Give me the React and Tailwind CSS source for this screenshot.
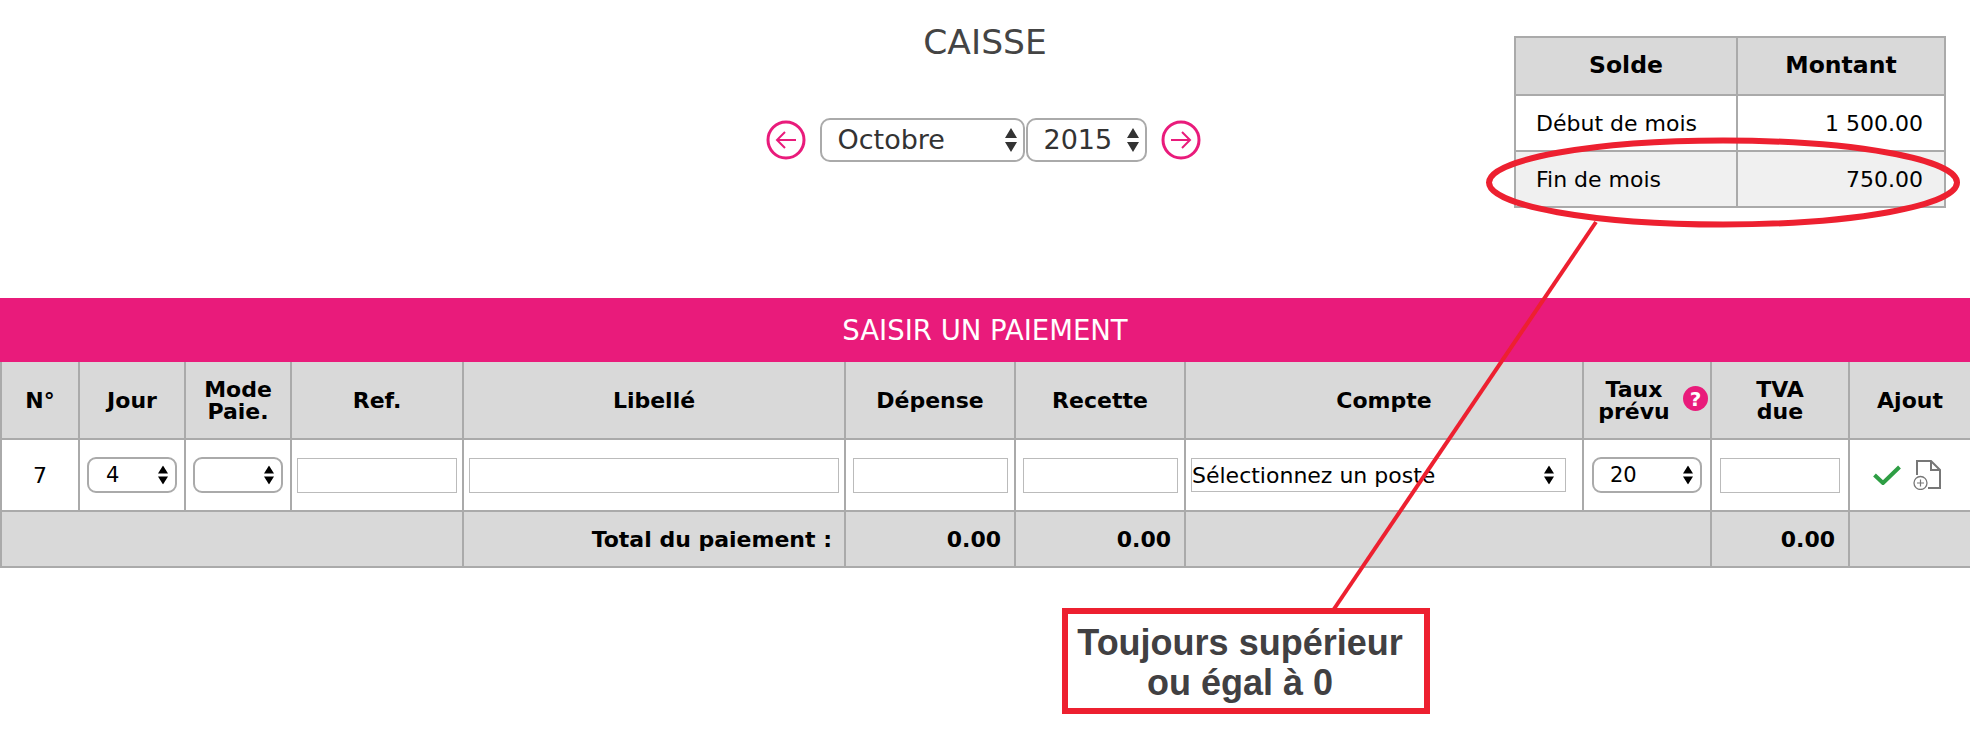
import React from "react";

const Arrows = ({ className = "" }) => (
  <svg viewBox="0 0 12 24" preserveAspectRatio="none" className={`pointer-events-none absolute top-1/2 -translate-y-1/2 ${className}`} aria-hidden="true">
    <path d="M6 0 L12 10 H0 Z M6 24 L0 14 H12 Z" fill="currentColor" />
  </svg>
);

const Pick = ({ value, wrap, text, arrow, children }) => (
  <div className={`relative ${wrap}`}>
    <select defaultValue={value} className={`block h-full w-full appearance-none bg-white outline-none ${text}`}>
      {children}
    </select>
    <Arrows className={arrow} />
  </div>
);

const CircleArrow = ({ dir }) => (
  <svg viewBox="0 0 40 40" width="40" height="40" fill="none" stroke="#e91b7b" aria-hidden="true">
    <circle cx="20" cy="20" r="18" strokeWidth="3" />
    {dir === "left" ? (
      <path d="M30 20 H11 M19 12 L11 20 L19 28" strokeWidth="2" />
    ) : (
      <path d="M10 20 H29 M21 12 L29 20 L21 28" strokeWidth="2" />
    )}
  </svg>
);

const Field = ({ className }) => (
  <input type="text" className={`mx-auto block h-[35px] border border-[#bbbbbb] bg-white outline-none ${className}`} />
);

const th = "border-2 border-t-0 border-[#aaaaaa] bg-[#d9d9d9] p-0 pt-[2px] text-center align-middle text-[22px] font-bold leading-[22px] text-black";
const td = "border-2 border-[#aaaaaa] bg-white p-0 align-middle";
const tot = "border-2 border-[#aaaaaa] bg-[#d9d9d9] p-0 text-right align-middle text-[22px] font-bold text-black";
const boxSelect = "rounded-[9px] border-2 border-[#aaaaaa] text-[21px] leading-none text-black";
const smallArrow = "right-[9px] h-[19px] w-[10px] text-black";
const navArrow = "right-[8px] h-[24px] w-[12px] text-[#333333]";
const navSelect = "rounded-[10px] border-2 border-[#aaaaaa] pl-[16px] text-[27px] text-[#333333]";

export default function App() {
  return (
    <div className="relative h-[737px] w-[1970px] overflow-hidden bg-white font-['DejaVu_Sans','Liberation_Sans',sans-serif]">
      <header className="grid h-[298px] grid-cols-[1fr_auto_1fr]">
        <div />
        <div className="flex flex-col items-center">
          <h1 className="mt-[22px] text-[34.5px] font-normal leading-[40px] text-[#444444]">CAISSE</h1>
          <div className="mt-[56px] flex items-center pr-[4px]">
            <CircleArrow dir="left" />
            <Pick value="Octobre" wrap="ml-[14px] h-[44px] w-[205px]" text={navSelect} arrow={navArrow}>
              <option>Octobre</option>
            </Pick>
            <Pick value="2015" wrap="ml-[1px] h-[44px] w-[121px]" text={navSelect} arrow={navArrow}>
              <option>2015</option>
            </Pick>
            <div className="ml-[14px]">
              <CircleArrow dir="right" />
            </div>
          </div>
        </div>
        <div className="flex justify-end pr-[24px] pt-[36px]">
          <table className="h-[170px] w-[430px] table-fixed border-collapse text-[22px] text-black">
            <colgroup>
              <col className="w-[222px]" />
              <col className="w-[208px]" />
            </colgroup>
            <tbody>
              <tr className="h-[58px]">
                <th className="border-2 border-[#aaaaaa] bg-[#d9d9d9] text-[23.5px] font-bold">Solde</th>
                <th className="border-2 border-[#aaaaaa] bg-[#d9d9d9] text-[23.5px] font-bold">Montant</th>
              </tr>
              <tr className="h-[56px]">
                <td className="border-2 border-[#aaaaaa] pl-[20px]">Début de mois</td>
                <td className="border-2 border-[#aaaaaa] pr-[21px] text-right">1 500.00</td>
              </tr>
              <tr className="h-[56px] bg-[#f0f0f0]">
                <td className="border-2 border-[#aaaaaa] pl-[20px]">Fin de mois</td>
                <td className="border-2 border-[#aaaaaa] pr-[21px] text-right">750.00</td>
              </tr>
            </tbody>
          </table>
        </div>
      </header>

      <section>
        <div className="flex h-[64px] items-center justify-center bg-[#e91b7b] pt-[1px] text-[27.5px] text-white">SAISIR UN PAIEMENT</div>
        <table className="w-[1970px] table-fixed border-collapse text-[22px] text-black">
          <colgroup>
            <col className="w-[78px]" />
            <col className="w-[106px]" />
            <col className="w-[106px]" />
            <col className="w-[172px]" />
            <col className="w-[382px]" />
            <col className="w-[170px]" />
            <col className="w-[170px]" />
            <col className="w-[398px]" />
            <col className="w-[128px]" />
            <col className="w-[138px]" />
            <col className="w-[122px]" />
          </colgroup>
          <thead>
            <tr className="h-[77px]">
              <th className={th}>N°</th>
              <th className={th}>Jour</th>
              <th className={th}>Mode<br />Paie.</th>
              <th className={th}>Ref.</th>
              <th className={th}>Libellé</th>
              <th className={th}>Dépense</th>
              <th className={th}>Recette</th>
              <th className={th}>Compte</th>
              <th className={`${th} relative`}>
                <span className="block pr-[26px]">Taux<br />prévu</span>
                <span className="absolute right-[2px] top-[24px] flex h-[25px] w-[25px] items-center justify-center rounded-full bg-[#e91b7b] text-[20px] font-bold text-white">?</span>
              </th>
              <th className={th}>TVA<br />due</th>
              <th className={th}>Ajout</th>
            </tr>
          </thead>
          <tbody>
            <tr className="h-[72px]">
              <td className={`${td} text-center`}>7</td>
              <td className={td}>
                <Pick value="4" wrap="mx-auto h-[36px] w-[90px]" text={`${boxSelect} pl-[17px]`} arrow={smallArrow}>
                  <option>4</option>
                </Pick>
              </td>
              <td className={td}>
                <Pick value="" wrap="mx-auto h-[36px] w-[90px]" text={boxSelect} arrow={smallArrow}>
                  <option value=""></option>
                </Pick>
              </td>
              <td className={td}><Field className="w-[160px]" /></td>
              <td className={td}><Field className="w-[370px]" /></td>
              <td className={td}><Field className="w-[155px]" /></td>
              <td className={td}><Field className="w-[155px]" /></td>
              <td className={td}>
                <Pick value="p" wrap="ml-[5px] h-[34px] w-[375px]" text="border border-[#bbbbbb] pt-[2px] text-[22px] leading-none text-black" arrow="right-[12px] h-[19px] w-[10px] text-black">
                  <option value="p">Sélectionnez un poste</option>
                </Pick>
              </td>
              <td className={td}>
                <Pick value="20" wrap="mx-auto h-[36px] w-[110px]" text={`${boxSelect} pl-[16px]`} arrow={smallArrow}>
                  <option>20</option>
                </Pick>
              </td>
              <td className={td}><Field className="w-[120px]" /></td>
              <td className={td}>
                <div className="flex items-center justify-center gap-[12px] pr-[6px]">
                  <svg viewBox="0 0 28 20" width="28" height="20" fill="none" stroke="#2e9e44" strokeWidth="4" aria-hidden="true">
                    <path d="M1.5 10 L10 18 L26.5 2" />
                  </svg>
                  <svg viewBox="0 0 28 30" width="28" height="30" fill="none" stroke="#777777" aria-hidden="true">
                    <path d="M4 15 V1 H18 L27 10 V28 H15" strokeWidth="2" />
                    <path d="M18 1 V10 H27" strokeWidth="2" />
                    <circle cx="7.5" cy="23" r="6.5" strokeWidth="1.3" />
                    <path d="M4 23 H11 M7.5 19.5 V26.5" strokeWidth="1.2" />
                  </svg>
                </div>
              </td>
            </tr>
            <tr className="h-[56px]">
              <td colSpan={4} className={tot} />
              <td className={`${tot} pr-[12px]`}>Total du paiement :</td>
              <td className={`${tot} pr-[13px]`}>0.00</td>
              <td className={`${tot} pr-[13px]`}>0.00</td>
              <td colSpan={2} className={tot} />
              <td className={`${tot} pr-[13px]`}>0.00</td>
              <td className={tot} />
            </tr>
          </tbody>
        </table>
      </section>

      <div className="ml-[1062px] mt-[40px] flex h-[106px] w-[368px] flex-col items-center justify-center border-[6px] border-[#ed2030] pr-[12px] pt-[4px] font-['Liberation_Sans',sans-serif] text-[36px] font-bold leading-[40px] text-[#414042]">
        <span>Toujours supérieur</span>
        <span>ou égal à 0</span>
      </div>

      <svg className="pointer-events-none absolute left-0 top-0" width="1970" height="737" fill="none" stroke="#ed2030" aria-hidden="true">
        <ellipse cx="1723" cy="182.5" rx="234" ry="42" strokeWidth="6" />
        <path d="M1596 222 L1334 609" strokeWidth="4" />
      </svg>
    </div>
  );
}
